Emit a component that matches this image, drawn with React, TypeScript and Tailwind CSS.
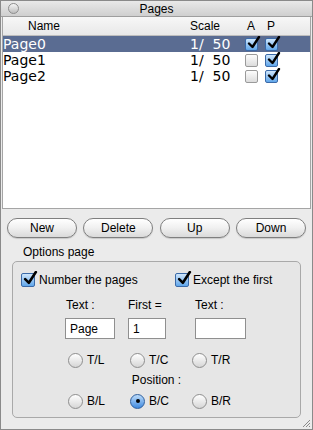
import React from "react";

const font = { fontFamily: '"Liberation Sans", Arial, sans-serif' };
const rowFont = { fontFamily: '"DejaVu Sans", "Liberation Sans", sans-serif' };

type Row = { name: string; scale: string; a: boolean; p: boolean };

const rows: Row[] = [
	{ name: "Page0", scale: "1/  50", a: true, p: true },
	{ name: "Page1", scale: "1/  50", a: false, p: true },
	{ name: "Page2", scale: "1/  50", a: false, p: true },
];

const Check = ({ on, size = 13 }: { on: boolean; size?: number }) => (
	<span
		className={`relative inline-block shrink-0 rounded-[2px] border ${on ? "border-[#3b6aa8] bg-gradient-to-b from-[#cfe6fb] to-[#5fa6ea]" : "border-[#9a9a9a] bg-gradient-to-b from-[#fdfdfd] to-[#dcdcdc]"}`}
		style={{ width: size, height: size }}
	>
		{on && (
			<svg viewBox="0 0 14 14" className="absolute -top-[3px] left-[1px]" width={size + 1} height={size + 1}>
				<path d="M2 7.5 L5.5 11 L12 1" fill="none" stroke="#000" strokeWidth="2.4" strokeLinecap="round" strokeLinejoin="round" />
			</svg>
		)}
	</span>
);

const Radio = ({ on, label }: { on?: boolean; label: string }) => (
	<div className="flex w-[62px] items-center gap-[4px]">
		<span
			className={`flex h-[15px] w-[15px] shrink-0 items-center justify-center rounded-full border ${on ? "border-[#2f5f9e] bg-gradient-to-b from-[#bcdcfa] to-[#3f8ade]" : "border-[#8e8e8e] bg-gradient-to-b from-[#ffffff] to-[#d6d6d6]"}`}
		>
			{on && <span className="h-[4px] w-[4px] rounded-full bg-black" />}
		</span>
		<span className="whitespace-nowrap text-[12px] leading-[14px] text-black">{label}</span>
	</div>
);

const Btn = ({ label }: { label: string }) => (
	<button className="h-[20px] w-[70px] rounded-full border border-[#7f7f7f] bg-gradient-to-b from-[#ffffff] via-[#f0f0f0] to-[#dadada] text-[12px] leading-[14px] text-black shadow-[0_1px_1px_rgba(0,0,0,0.15)]">
		{label}
	</button>
);

export default function App() {
	return (
		<div className="flex h-[430px] w-[313px] flex-col overflow-hidden border border-[#8a8a8a] bg-[#ebebeb] text-black" style={font}>
			{/* title bar */}
			<div className="relative flex h-[16px] shrink-0 items-center justify-center border-b border-[#9e9e9e] bg-gradient-to-b from-[#e9e9e9] to-[#cfcfcf]">
				<span className="absolute left-[7px] top-[2px] h-[11px] w-[11px] rounded-full border border-[#8d8d8d] bg-gradient-to-b from-[#f6f6f6] to-[#bdbdbd]" />
				<span className="text-[12px] leading-[14px]">Pages</span>
			</div>

			{/* list */}
			<div className="mx-[1px] flex h-[192px] shrink-0 flex-col border-x border-b border-[#a5a5a5] bg-white">
				<div className="flex h-[19px] shrink-0 items-center border-b border-[#bdbdbd] bg-gradient-to-b from-[#f7f7f7] to-[#e8e8e8] text-[12px] leading-[14px]">
					<span className="w-[187px] pl-[25px]">Name</span>
					<span className="w-[55px]">Scale</span>
					<span className="w-[20px] pl-[2px]">A</span>
					<span className="pl-[2px]">P</span>
				</div>
				{rows.map((r, i) => (
					<div
						key={r.name}
						style={rowFont}
						className={`flex h-[16px] shrink-0 items-center text-[14px] leading-[16px] ${i === 0 ? "bg-[#5a6c92] text-white" : "text-black"}`}
					>
						<span className="w-[187px]">{r.name}</span>
						<span className="w-[55px] whitespace-pre">{r.scale}</span>
						<span className="flex w-[20px] items-center">
							<Check on={r.a} />
						</span>
						<span className="flex items-center">
							<Check on={r.p} />
						</span>
					</div>
				))}
			</div>

			{/* buttons */}
			<div className="mt-[9px] flex shrink-0 justify-between px-[6px]">
				<Btn label="New" />
				<Btn label="Delete" />
				<Btn label="Up" />
				<Btn label="Down" />
			</div>

			{/* options */}
			<div className="mt-[7px] shrink-0 pl-[22px] text-[12px] leading-[14px]">Options page</div>
			<div className="mx-[11px] mt-[2px] flex h-[157px] shrink-0 flex-col rounded-[5px] border border-[#a9a9a9] bg-[#e6e6e6] pt-[10px]">
				<div className="flex h-[16px] items-center">
					<div className="flex w-[162px] items-center gap-[4px] pl-[8px]">
						<Check on size={14} />
						<span className="whitespace-nowrap text-[12px] leading-[14px]">Number the pages</span>
					</div>
					<div className="flex items-center gap-[4px]">
						<Check on size={14} />
						<span className="whitespace-nowrap text-[12px] leading-[14px]">Except the first</span>
					</div>
				</div>

				<div className="mt-[10px] flex pl-[52px] text-[12px] leading-[14px]">
					<div className="flex w-[50px] flex-col">
						<span className="whitespace-nowrap pl-[1px]">Text :</span>
						<input
							readOnly
							value="Page"
							className="mt-[6px] h-[21px] w-[50px] border border-[#8f8f8f] bg-white px-[4px] text-[12px] outline-none"
						/>
					</div>
					<div className="ml-[13px] flex w-[38px] flex-col">
						<span className="whitespace-nowrap">First =</span>
						<input
							readOnly
							value="1"
							className="mt-[6px] h-[21px] w-[38px] border border-[#8f8f8f] bg-white px-[4px] text-[12px] outline-none"
						/>
					</div>
					<div className="ml-[29px] flex w-[51px] flex-col">
						<span className="whitespace-nowrap">Text :</span>
						<input
							readOnly
							value=""
							className="mt-[6px] h-[21px] w-[51px] border border-[#8f8f8f] bg-white px-[3px] text-[12px] outline-none"
						/>
					</div>
				</div>

				<div className="mt-[13px] flex h-[16px] items-center pl-[55px]">
					<Radio label="T/L" />
					<Radio label="T/C" />
					<Radio label="T/R" />
				</div>
				<div className="mt-[5px] text-center text-[12px] leading-[14px]">Position :</div>
				<div className="mt-[6px] flex h-[16px] items-center pl-[55px]">
					<Radio label="B/L" />
					<Radio on label="B/C" />
					<Radio label="B/R" />
				</div>
			</div>

			{/* resize grip */}
			<div className="relative flex-1">
				<svg className="absolute bottom-[1px] right-[1px]" width="10" height="10" viewBox="0 0 10 10">
					<path d="M9 2 L2 9 M9 5 L5 9 M9 8 L8 9" stroke="#8a8a8a" strokeWidth="1" />
				</svg>
			</div>
		</div>
	);
}
